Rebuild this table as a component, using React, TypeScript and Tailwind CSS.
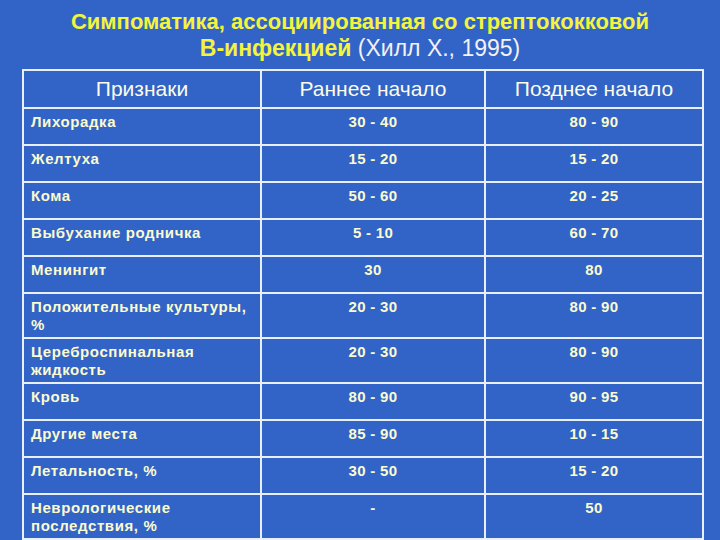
const rows: [string, string, string][] = [
  ['Лихорадка', '30 - 40', '80 - 90'],
  ['Желтуха', '15 - 20', '15 - 20'],
  ['Кома', '50 - 60', '20 - 25'],
  ['Выбухание родничка', '5 - 10', '60 - 70'],
  ['Менингит', '30', '80'],
  ['Положительные культуры, %', '20 - 30', '80 - 90'],
  ['Цереброспинальная жидкость', '20 - 30', '80 - 90'],
  ['Кровь', '80 - 90', '90 - 95'],
  ['Другие места', '85 - 90', '10 - 15'],
  ['Летальность, %', '30 - 50', '15 - 20'],
  ['Неврологические последствия, %', '-', '50'],
]

// two-line rows are taller
const tall = new Set([5, 6, 10])

export default function App() {
  return (
    <div className="w-[720px] h-[540px] overflow-hidden bg-[#3264c8] font-['Liberation_Sans',Arial,sans-serif]">
      {/* Title */}
      <div className="pt-[9px] text-center leading-[26px] font-bold text-[#f4f43c]">
        <div className="text-[22px]">Симпоматика, ассоциированная со стрептококковой</div>
        <div className="text-[23px]">
          В-инфекцией <span className="font-normal text-[#f2f2f2]">(Хилл Х., 1995)</span>
        </div>
      </div>

      {/* Table */}
      <table className="ml-[22px] mt-[8px] w-[680px] border-collapse table-fixed">
        <colgroup>
          <col className="w-[238px]" />
          <col className="w-[224px]" />
          <col className="w-[218px]" />
        </colgroup>
        <thead>
          <tr className="h-[38px]">
            {['Признаки', 'Раннее начало', 'Позднее начало'].map((h) => (
              <th
                key={h}
                className="border-2 border-[#e8f0ff] align-middle text-center text-[21px] font-normal text-[#fcfce8]"
              >
                {h}
              </th>
            ))}
          </tr>
        </thead>
        <tbody>
          {rows.map(([name, early, late], i) => (
            <tr key={name} className={tall.has(i) ? 'h-[45px]' : 'h-[37px]'}>
              <td className="border-2 border-[#e8f0ff] align-top pl-[7px] pr-1 pt-[4px] text-[15px] leading-[18px] font-bold tracking-[0.6px] text-[#fbfbd0]">
                {name}
              </td>
              <td className="border-2 border-[#e8f0ff] align-top pt-[4px] text-center text-[15px] leading-[18px] font-bold tracking-[0.3px] text-[#fbfbd0]">
                {early}
              </td>
              <td className="border-2 border-[#e8f0ff] align-top pt-[4px] text-center text-[15px] leading-[18px] font-bold tracking-[0.3px] text-[#fbfbd0]">
                {late}
              </td>
            </tr>
          ))}
        </tbody>
      </table>
    </div>
  )
}
